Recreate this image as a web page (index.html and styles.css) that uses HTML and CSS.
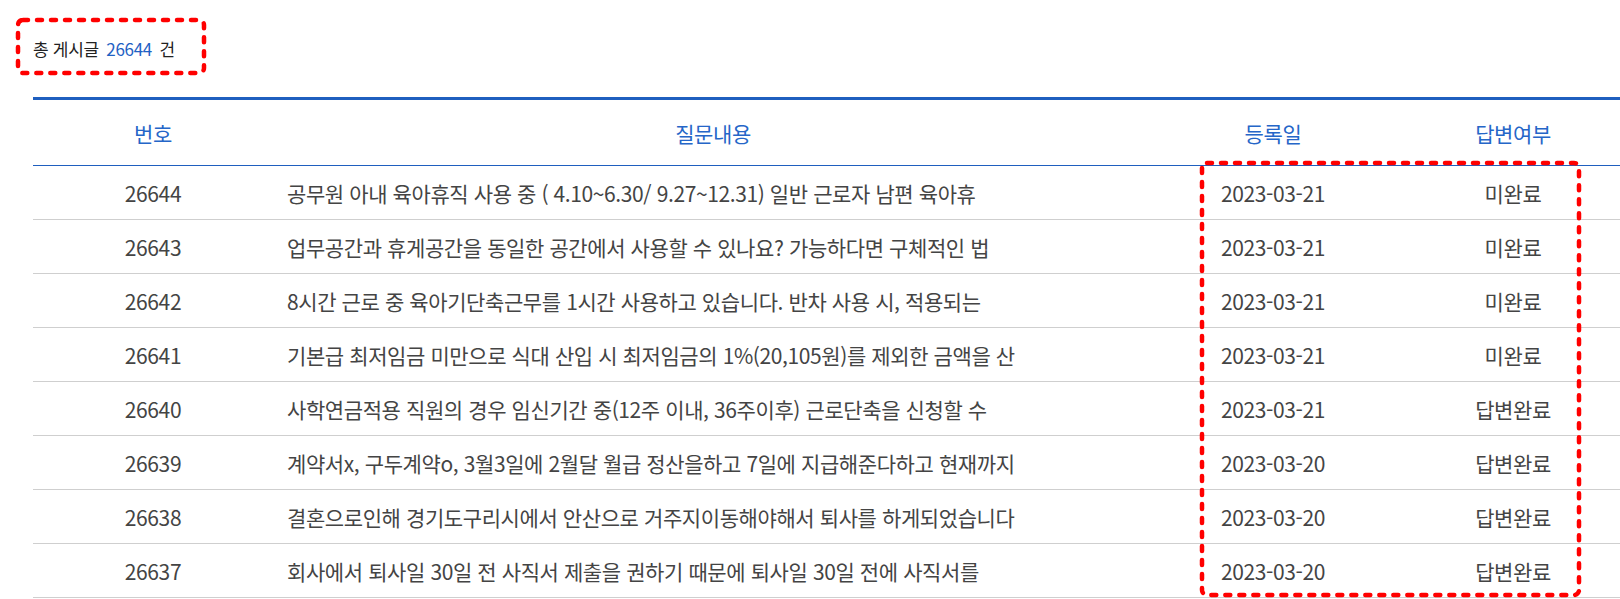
FILE: index.html
```html
<!DOCTYPE html>
<html lang="ko">
<head>
    <meta charset="UTF-8" />
    <meta name="viewport" content="width=device-width, initial-scale=1.0" />
    <title>질문 게시판</title>
    <link rel="stylesheet" href="styles.css">
</head>
<body>
    <div class="board">
        <p class="total">총 게시글 <span class="count">26644</span> 건</p>

        <table class="list">
            <colgroup>
                <col class="col-no">
                <col class="col-title">
                <col class="col-date">
                <col class="col-state">
            </colgroup>
            <thead>
                <tr>
                    <th>번호</th>
                    <th>질문내용</th>
                    <th>등록일</th>
                    <th>답변여부</th>
                </tr>
            </thead>
            <tbody>
                <tr>
                    <td>26644</td>
                    <td class="title">공무원 아내 육아휴직 사용 중 ( 4.10~6.30/ 9.27~12.31) 일반 근로자 남편 육아휴</td>
                    <td>2023-03-21</td>
                    <td>미완료</td>
                </tr>
                <tr>
                    <td>26643</td>
                    <td class="title">업무공간과 휴게공간을 동일한 공간에서 사용할 수 있나요? 가능하다면 구체적인 법</td>
                    <td>2023-03-21</td>
                    <td>미완료</td>
                </tr>
                <tr>
                    <td>26642</td>
                    <td class="title">8시간 근로 중 육아기단축근무를 1시간 사용하고 있습니다. 반차 사용 시, 적용되는</td>
                    <td>2023-03-21</td>
                    <td>미완료</td>
                </tr>
                <tr>
                    <td>26641</td>
                    <td class="title">기본급 최저임금 미만으로 식대 산입 시 최저임금의 1%(20,105원)를 제외한 금액을 산</td>
                    <td>2023-03-21</td>
                    <td>미완료</td>
                </tr>
                <tr>
                    <td>26640</td>
                    <td class="title">사학연금적용 직원의 경우 임신기간 중(12주 이내, 36주이후) 근로단축을 신청할 수</td>
                    <td>2023-03-21</td>
                    <td>답변완료</td>
                </tr>
                <tr>
                    <td>26639</td>
                    <td class="title">계약서x, 구두계약o, 3월3일에 2월달 월급 정산을하고 7일에 지급해준다하고 현재까지</td>
                    <td>2023-03-20</td>
                    <td>답변완료</td>
                </tr>
                <tr>
                    <td>26638</td>
                    <td class="title">결혼으로인해 경기도구리시에서 안산으로 거주지이동해야해서 퇴사를 하게되었습니다</td>
                    <td>2023-03-20</td>
                    <td>답변완료</td>
                </tr>
                <tr>
                    <td>26637</td>
                    <td class="title">회사에서 퇴사일 30일 전 사직서 제출을 권하기 때문에 퇴사일 30일 전에 사직서를</td>
                    <td>2023-03-20</td>
                    <td>답변완료</td>
                </tr>
            </tbody>
        </table>
    </div>

    <!-- annotation marks drawn over the page -->
    <svg class="mark mark-total" width="190" height="57" viewBox="0 0 190 57">
        <rect x="2" y="2" width="186" height="53" rx="5" />
    </svg>
    <svg class="mark mark-dates" width="381" height="436" viewBox="0 0 381 436">
        <rect x="2" y="2" width="377" height="432" rx="5" />
    </svg>
</body>
</html>
```

FILE: styles.css
```css
body {
    margin: 0;
    font-family: "Noto Sans CJK KR", "Noto Sans", sans-serif;
    background: #fff;
    color: #444;
    overflow: hidden;
}

.board {
    padding: 38px 0 0 33px;
}

.total {
    margin: 0 0 37px;
    font-size: 17px;
    line-height: 22px;
    color: #222;
    letter-spacing: -0.3px;
}

.total .count {
    color: #1f62c4;
    margin: 0 3px;
}

.list {
    width: 1600px;
    border-collapse: collapse;
    table-layout: fixed;
    border-top: 3px solid #1f5fbf;
    font-size: 21px;
    letter-spacing: -0.4px;
}

.col-no { width: 15%; }
.col-title { width: 55%; }
.col-date { width: 15%; }
.col-state { width: 15%; }

.list th {
    height: 65px;
    font-weight: 400;
    color: #2566c8;
    text-align: center;
    border-bottom: 1px solid #1f5fbf;
    padding: 0;
}

.list td {
    height: 53px;
    padding: 0;
    text-align: center;
    color: #444;
    border-bottom: 1px solid #cfcfcf;
    white-space: nowrap;
    overflow: hidden;
}

.list td.title {
    text-align: left;
    padding-left: 14px;
}

.mark {
    position: absolute;
    overflow: visible;
}

.mark rect {
    fill: none;
    stroke: #ff0000;
    stroke-width: 4.5;
    stroke-dasharray: 5 9;
    stroke-linecap: round;
}

.mark-total {
    left: 16px;
    top: 18px;
}

.mark-dates {
    left: 1200px;
    top: 161px;
}
```
